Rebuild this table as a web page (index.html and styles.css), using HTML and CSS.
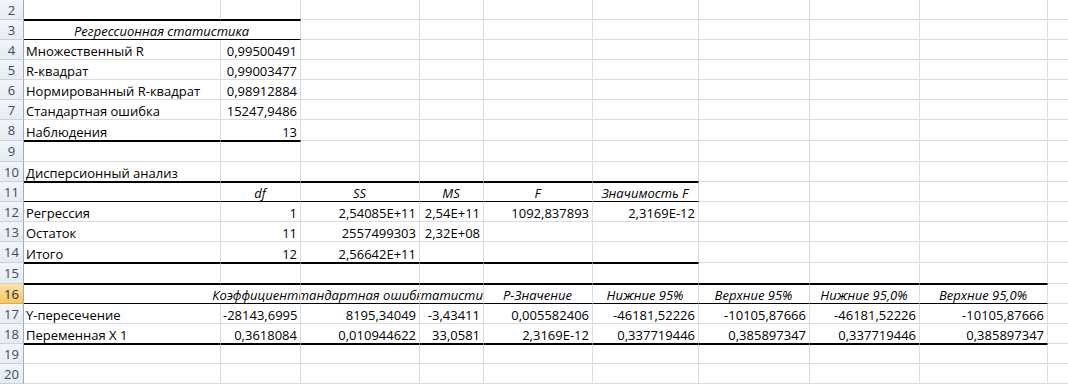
FILE: index.html
```html
<!DOCTYPE html>
<html lang="ru">
<head>
<meta charset="utf-8">
<title>Регрессия</title>
<link rel="stylesheet" href="styles.css">
</head>
<body>
<table class="sheet">
<colgroup>
<col class="w-hd"><col class="w-a"><col class="w-b"><col class="w-c"><col class="w-d"><col class="w-e"><col class="w-f"><col class="w-g"><col class="w-h"><col class="w-i"><col class="w-j">
</colgroup>
<tr class="h20"><th>2</th><td class="kb"></td><td class="kb"></td><td></td><td></td><td></td><td></td><td></td><td></td><td></td><td></td></tr>
<tr class="h20"><th>3</th><td colspan="2" class="c i kt kb">Регрессионная статистика</td><td></td><td></td><td></td><td></td><td></td><td></td><td></td><td></td></tr>
<tr class="h20"><th>4</th><td>Множественный R</td><td class="r">0,99500491</td><td></td><td></td><td></td><td></td><td></td><td></td><td></td><td></td></tr>
<tr class="h20"><th>5</th><td>R-квадрат</td><td class="r">0,99003477</td><td></td><td></td><td></td><td></td><td></td><td></td><td></td><td></td></tr>
<tr class="h20"><th>6</th><td>Нормированный R-квадрат</td><td class="r">0,98912884</td><td></td><td></td><td></td><td></td><td></td><td></td><td></td><td></td></tr>
<tr class="h20"><th>7</th><td>Стандартная ошибка</td><td class="r">15247,9486</td><td></td><td></td><td></td><td></td><td></td><td></td><td></td><td></td></tr>
<tr class="h21"><th>8</th><td class="kb">Наблюдения</td><td class="r kb">13</td><td></td><td></td><td></td><td></td><td></td><td></td><td></td><td></td></tr>
<tr class="h21"><th>9</th><td class="kt"></td><td class="kt"></td><td></td><td></td><td></td><td></td><td></td><td></td><td></td><td></td></tr>
<tr class="h20"><th>10</th><td class="kb">Дисперсионный анализ</td><td class="kb"></td><td class="kb"></td><td class="kb"></td><td class="kb"></td><td class="kb"></td><td></td><td></td><td></td><td></td></tr>
<tr class="h20"><th>11</th><td class="kt kb"></td><td class="c i kt kb">df</td><td class="c i kt kb">SS</td><td class="c i kt kb">MS</td><td class="c i kt kb">F</td><td class="c i kt kb">Значимость F</td><td></td><td></td><td></td><td></td></tr>
<tr class="h20"><th>12</th><td>Регрессия</td><td class="r">1</td><td class="r">2,54085E+11</td><td class="r">2,54E+11</td><td class="r">1092,837893</td><td class="r">2,3169E-12</td><td></td><td></td><td></td><td></td></tr>
<tr class="h20"><th>13</th><td>Остаток</td><td class="r">11</td><td class="r">2557499303</td><td class="r">2,32E+08</td><td></td><td></td><td></td><td></td><td></td><td></td></tr>
<tr class="h21"><th>14</th><td class="kb">Итого</td><td class="r kb">12</td><td class="r kb">2,56642E+11</td><td class="kb"></td><td class="kb"></td><td class="kb"></td><td></td><td></td><td></td><td></td></tr>
<tr class="h21"><th>15</th><td class="kt kb"></td><td class="kt kb"></td><td class="kt kb"></td><td class="kt kb"></td><td class="kt kb"></td><td class="kt kb"></td><td class="kb"></td><td class="kb"></td><td class="kb"></td><td></td></tr>
<tr class="h20"><th class="sel">16</th><td colspan="2" class="i kt kb"><div class="spill-b">Коэффициенты</div></td><td class="i kt kb"><div class="spill">Стандартная ошибка</div></td><td class="i kt kb"><div class="spill">t-статистика</div></td><td class="c i kt kb">P-Значение</td><td class="c i kt kb">Нижние 95%</td><td class="c i kt kb">Верхние 95%</td><td class="c i kt kb">Нижние 95,0%</td><td class="c i kt kb">Верхние 95,0%</td><td></td></tr>
<tr class="h20"><th>17</th><td>Y-пересечение</td><td class="r">-28143,6995</td><td class="r">8195,34049</td><td class="r">-3,43411</td><td class="r">0,005582406</td><td class="r">-46181,52226</td><td class="r">-10105,87666</td><td class="r">-46181,52226</td><td class="r">-10105,87666</td><td></td></tr>
<tr class="h20"><th>18</th><td class="kb">Переменная X 1</td><td class="r kb">0,3618084</td><td class="r kb">0,010944622</td><td class="r kb">33,0581</td><td class="r kb">2,3169E-12</td><td class="r kb">0,337719446</td><td class="r kb">0,385897347</td><td class="r kb">0,337719446</td><td class="r kb">0,385897347</td><td></td></tr>
<tr class="h20"><th>19</th><td class="kt"></td><td class="kt"></td><td class="kt"></td><td class="kt"></td><td class="kt"></td><td class="kt"></td><td class="kt"></td><td class="kt"></td><td class="kt"></td><td></td></tr>
<tr class="h20"><th>20</th><td></td><td></td><td></td><td></td><td></td><td></td><td></td><td></td><td></td><td></td></tr>
</table>
</body>
</html>
```

FILE: styles.css
```css
html, body {
  margin: 0;
  padding: 0;
  background: #ffffff;
  overflow: hidden;
}
body {
  width: 1068px;
  height: 384px;
}
.sheet {
  border-collapse: separate;
  border-spacing: 0;
  table-layout: fixed;
  width: 1088px;
  font-family: "Open Sans", "Liberation Sans", sans-serif;
  font-size: 13px;
  color: #000;
}
.w-hd { width: 24px; }
.w-a { width: 197px; }
.w-b { width: 80px; }
.w-c { width: 119px; }
.w-d { width: 64px; }
.w-e { width: 109px; }
.w-f { width: 106px; }
.w-g { width: 111px; }
.w-h { width: 110px; }
.w-i { width: 128px; }
.w-j { width: 40px; }

.h20 { height: 20px; }
.h21 { height: 21px; }

.sheet td,
.sheet th {
  box-sizing: border-box;
  padding: 0 3px 0 2px;
  border-right: 1px solid #dadcdd;
  border-bottom: 1px solid #dadcdd;
  vertical-align: bottom;
  line-height: 16px;
  white-space: nowrap;
  overflow: hidden;
  text-align: left;
}
.sheet th {
  padding: 0;
  background: linear-gradient(#f2f5f9, #e6ebf1);
  border-right-color: #9eabb9;
  border-bottom-color: #c9d1db;
  color: #3c4b5e;
  font-weight: normal;
  text-align: center;
  vertical-align: middle;
}
.sheet th.sel {
  background: linear-gradient(#f9e3a8, #f4c766);
  border-bottom-color: #e8a93c;
  color: #2c2c2c;
}
.r { text-align: right !important; }
.c { text-align: center !important; }
.i { font-style: italic; }
.sheet .kb { border-bottom-color: #000; }
.sheet .kt { border-top: 1px solid #000; }

.spill {
  margin: 0 -60px;
  text-align: center;
}
.spill-b {
  margin-left: 136px;
  width: 200px;
  text-align: center;
}
.sheet td:has(> .spill), .sheet td:has(> .spill-b) {
  padding: 0;
}
```
